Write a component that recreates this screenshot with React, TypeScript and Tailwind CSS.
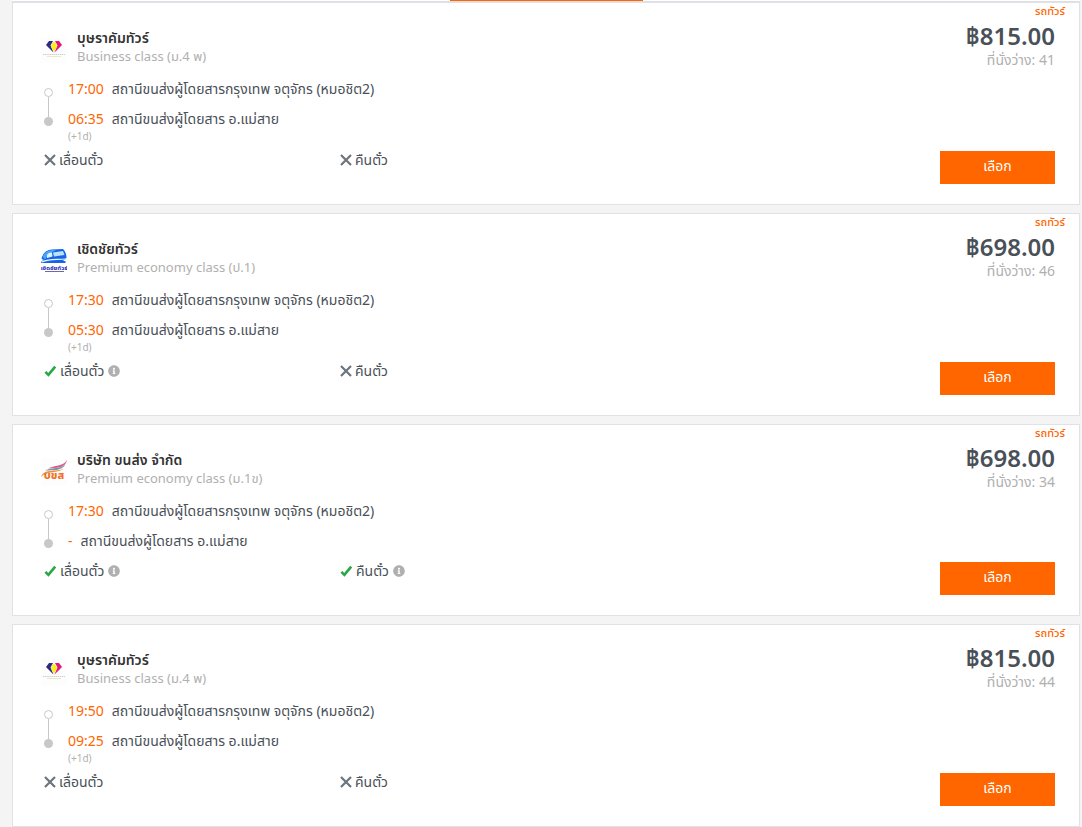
import type { ReactNode } from 'react'
import { FaInfoCircle } from 'react-icons/fa'

type Operator = 'busarakham' | 'cherdchai' | 'transport'

interface Policy {
  label: string
  allowed: boolean
}

interface Trip {
  id: number
  operator: Operator
  name: string
  seatClass: string
  departure: string
  arrival: string
  nextDay?: boolean
  price: string
  seats: number
  policies: Policy[]
}

const FROM = 'สถานีขนส่งผู้โดยสารกรุงเทพ จตุจักร (หมอชิต2)'
const TO = 'สถานีขนส่งผู้โดยสาร อ.แม่สาย'

const trips: Trip[] = [
  {
    id: 1,
    operator: 'busarakham',
    name: 'บุษราคัมทัวร์',
    seatClass: 'Business class (ม.4 พ)',
    departure: '17:00',
    arrival: '06:35',
    nextDay: true,
    price: '฿815.00',
    seats: 41,
    policies: [{ label: 'เลื่อนตั๋ว', allowed: false }, { label: 'คืนตั๋ว', allowed: false }],
  },
  {
    id: 2,
    operator: 'cherdchai',
    name: 'เชิดชัยทัวร์',
    seatClass: 'Premium economy class (ป.1)',
    departure: '17:30',
    arrival: '05:30',
    nextDay: true,
    price: '฿698.00',
    seats: 46,
    policies: [{ label: 'เลื่อนตั๋ว', allowed: true }, { label: 'คืนตั๋ว', allowed: false }],
  },
  {
    id: 3,
    operator: 'transport',
    name: 'บริษัท ขนส่ง จำกัด',
    seatClass: 'Premium economy class (ม.1ข)',
    departure: '17:30',
    arrival: '-',
    price: '฿698.00',
    seats: 34,
    policies: [{ label: 'เลื่อนตั๋ว', allowed: true }, { label: 'คืนตั๋ว', allowed: true }],
  },
  {
    id: 4,
    operator: 'busarakham',
    name: 'บุษราคัมทัวร์',
    seatClass: 'Business class (ม.4 พ)',
    departure: '19:50',
    arrival: '09:25',
    nextDay: true,
    price: '฿815.00',
    seats: 44,
    policies: [{ label: 'เลื่อนตั๋ว', allowed: false }, { label: 'คืนตั๋ว', allowed: false }],
  },
]

const logos: Record<Operator, ReactNode> = {
  busarakham: (
    <>
      <rect width="26" height="26" fill="#fdfdfd" />
      <path d="M5 8 L8 4 H12 L9.5 8.5 L12.5 15.5 Z" fill="#2a2a86" />
      <path d="M21 8 L18 4 H14 L16.5 8.5 L13.5 15.5 Z" fill="#e5147f" />
      <path d="M10.5 7 L13 4.5 L15.5 7 L16 9.5 L13 15 L10 9.5 Z" fill="#fdee21" />
      <path d="M2 17.5 H24" stroke="#cfcfcf" strokeWidth="1" strokeDasharray="1.5 0.6" />
      <path d="M6 19.5 H20" stroke="#f3e6c4" strokeWidth="1" />
    </>
  ),
  cherdchai: (
    <>
      <path d="M1 9 C3 4 6 2 11 1.5 L22 1 C24 3 25.5 6 25.5 10 L22 13 C26 13 26 15 22 15 H0 C0 13 2 12 4 12 C1 12 0 11 1 9 Z" fill="#1565e6" />
      <path d="M2 8 C4 4 7 2.5 12 2 L15 2.5 C10 4 6 6 5 11 C3 11 2 10 2 8 Z" fill="#49a8f5" />
      <path d="M12 4.5 L22 3 L23.5 7 L13 8.5 Z" fill="#b9e2ff" />
      <path d="M6 7 C7 5 9 4.5 11 4.5 L11.5 8.5 L6 10 Z" fill="#dff2ff" />
      <path d="M1 14 C9 10 15 12 25 11" stroke="#e9f6ff" strokeWidth="1.2" fill="none" />
      <text x="13" y="22" textAnchor="middle" fontSize="6" fontWeight="700" fill="#1b1bb8">เชิดชัยทัวร์</text>
      <path d="M4 23.5 H23" stroke="#6a6aa8" strokeWidth="1" />
    </>
  ),
  transport: (
    <>
      <rect width="26" height="26" fill="#fdfdfd" />
      <path d="M7 9.5 C13 6 22 8 26 1 C24.5 9.5 16 9 7 9.5 Z" fill="#dc5f8c" />
      <path d="M4 11.5 C11 8 19 10.5 24.5 5.5 C20 12.5 12 11 4 11.5 Z" fill="#6f9aa6" />
      <path d="M0 18 C3 9 15 13.5 23 9.5 C18 14.5 5 11.5 0 18 Z" fill="#f58b3c" />
      <text x="13" y="20" textAnchor="middle" fontSize="11" fontWeight="800" fill="#f0701f">บขส</text>
    </>
  ),
}

function OperatorLogo({ operator }: { operator: Operator }) {
  return (
    <svg viewBox="0 0 26 26" className="mt-[9px] h-[26px] w-[26px] shrink-0" aria-hidden="true">
      {logos[operator]}
    </svg>
  )
}

function PolicyItem({ label, allowed }: Policy) {
  return (
    <div className={`flex items-center ${allowed ? 'gap-1' : 'gap-[3px]'}`}>
      <svg viewBox="0 0 12 12" className="h-3 w-3" aria-hidden="true">
        {allowed ? (
          <path d="M1.4 6.8 L4.4 9.8 L11.2 1.6" stroke="#28a745" strokeWidth="2.6" fill="none" />
        ) : (
          <path d="M1 1 L11 11 M11 1 L1 11" stroke="#6c757d" strokeWidth="2.2" />
        )}
      </svg>
      <span>{label}</span>
      {allowed && <FaInfoCircle className="h-3 w-3 text-[#b0b0b0]" />}
    </div>
  )
}

function TripCard({ trip }: { trip: Trip }) {
  return (
    <article className="flex border border-[#e1e2e8] bg-white">
      <div className="flex-1 pt-[25px] pb-[34px] pl-7">
        <div className="flex items-start gap-[10px]">
          <OperatorLogo operator={trip.operator} />
          <div>
            <h2 className="text-[14px] leading-5 font-semibold text-[#333]">{trip.name}</h2>
            <p className="text-[13px] leading-[17px] text-[#b0b0b0]">{trip.seatClass}</p>
          </div>
        </div>

        <div className="mt-[14px] flex items-start gap-[15px] pl-[3px]">
          <div className="flex flex-col items-center pt-[9px]">
            <div className="h-[9px] w-[9px] rounded-full border border-[#c8c8c8]" />
            <div className="h-5 w-px bg-[#c8c8c8]" />
            <div className="h-[9px] w-[9px] rounded-full bg-[#c8c8c8]" />
          </div>
          <div className="text-[14px] leading-5">
            <div className="flex gap-2">
              <span className="text-[#ff6600]">{trip.departure}</span>
              <span>{FROM}</span>
            </div>
            <div className="mt-[10px] flex gap-2">
              <span className="text-[#ff6600]">{trip.arrival}</span>
              <span>{TO}</span>
            </div>
            {trip.nextDay && <p className="h-[11px] text-[10px] leading-[14px] text-[#b0b0b0]">(+1d)</p>}
          </div>
        </div>

        <div className="mt-[10px] grid grid-cols-3 pl-[3px] text-[14px] leading-5">
          {trip.policies.map((policy) => (
            <PolicyItem key={policy.label} {...policy} />
          ))}
        </div>
      </div>

      <div className="flex w-[147px] flex-col items-end pr-6 pb-5 text-right">
        <span className="-mr-[10px] text-[11px] leading-4 font-medium text-[#ff6600]">รถทัวร์</span>
        <strong className="text-[24px] leading-[34px] font-semibold text-[#495057]">{trip.price}</strong>
        <span className="text-[14px] leading-[14px] text-[#b0b0b0]">ที่นั่งว่าง: {trip.seats}</span>
        <button type="button" className="mt-auto h-[33px] w-[115px] bg-[#ff6600] pb-1 text-[14px] text-white">
          เลือก
        </button>
      </div>
    </article>
  )
}

export default function App() {
  return (
    <main className="min-h-screen bg-[#f4f4f4] pr-[2px] pl-3 font-['Noto_Sans','Noto_Sans_Thai',sans-serif] text-[#495057]">
      <div className="flex h-[2px] justify-center border-b border-[#dedfe4] bg-white">
        <div className="w-[193px] bg-[#ff6600]" />
      </div>
      <div className="flex flex-col gap-2">
        {trips.map((trip) => (
          <TripCard key={trip.id} trip={trip} />
        ))}
      </div>
    </main>
  )
}
